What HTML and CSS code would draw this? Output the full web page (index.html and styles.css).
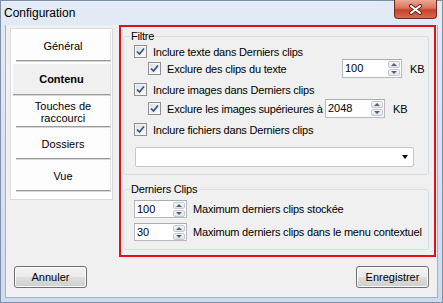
FILE: index.html
```html
<!DOCTYPE html>
<html lang="fr">
<head>
    <meta charset="UTF-8">
    <meta name="viewport" content="width=device-width, initial-scale=1.0">
    <title>Configuration</title>
    <link rel="stylesheet" href="styles.css">
</head>
<body>
    <div class="window">
        <div class="titlebar">
            <span class="title">Configuration</span>
            <div class="close-btn">
                <svg width="15" height="11" viewBox="0 0 15 11">
                    <path d="M3 2 L12 9 M12 2 L3 9" stroke="#5a2a22" stroke-width="4" stroke-linecap="round"/>
                    <path d="M3 2 L12 9 M12 2 L3 9" stroke="#fff" stroke-width="2" stroke-linecap="round"/>
                </svg>
            </div>
        </div>

        <div class="client">
            <div class="main">
                <div class="tabs">
                    <div class="tab">Général</div>
                    <div class="tab active">Contenu</div>
                    <div class="tab">Touches de<br>raccourci</div>
                    <div class="tab">Dossiers</div>
                    <div class="tab">Vue</div>
                </div>

                <div class="highlight">
                    <fieldset class="group filtre">
                        <legend>Filtre</legend>

                        <div class="row first">
                            <span class="check"><svg width="9" height="9" viewBox="0 0 9 9"><path d="M1 4.5 L3.5 7 L8 1.5" stroke="#3b4f8c" stroke-width="1.7" fill="none"/></svg></span>
                            <span class="text">Inclure texte dans Derniers clips</span>
                        </div>
                        <div class="row tall sub">
                            <div class="label size-text">
                                <span class="check"><svg width="9" height="9" viewBox="0 0 9 9"><path d="M1 4.5 L3.5 7 L8 1.5" stroke="#3b4f8c" stroke-width="1.7" fill="none"/></svg></span>
                                <span class="text">Exclure des clips du texte</span>
                            </div>
                            <div class="spin">
                                <span class="value">100</span>
                                <span class="arrows"><span class="up"></span><span class="down"></span></span>
                            </div>
                            <span class="unit">KB</span>
                        </div>

                        <div class="row gap">
                            <span class="check"><svg width="9" height="9" viewBox="0 0 9 9"><path d="M1 4.5 L3.5 7 L8 1.5" stroke="#3b4f8c" stroke-width="1.7" fill="none"/></svg></span>
                            <span class="text">Inclure images dans Derniers clips</span>
                        </div>
                        <div class="row tall sub small-gap">
                            <div class="label size-images">
                                <span class="check"><svg width="9" height="9" viewBox="0 0 9 9"><path d="M1 4.5 L3.5 7 L8 1.5" stroke="#3b4f8c" stroke-width="1.7" fill="none"/></svg></span>
                                <span class="text">Exclure les images supérieures à</span>
                            </div>
                            <div class="spin">
                                <span class="value">2048</span>
                                <span class="arrows"><span class="up"></span><span class="down"></span></span>
                            </div>
                            <span class="unit">KB</span>
                        </div>

                        <div class="row gap">
                            <span class="check"><svg width="9" height="9" viewBox="0 0 9 9"><path d="M1 4.5 L3.5 7 L8 1.5" stroke="#3b4f8c" stroke-width="1.7" fill="none"/></svg></span>
                            <span class="text">Inclure fichiers dans Derniers clips</span>
                        </div>

                        <div class="dropdown"><span class="caret"></span></div>
                    </fieldset>

                    <fieldset class="group clips">
                        <legend>Derniers Clips</legend>
                        <div class="row clip first-clip">
                            <div class="spin narrow">
                                <span class="value">100</span>
                                <span class="arrows"><span class="up"></span><span class="down"></span></span>
                            </div>
                            <span class="text">Maximum derniers clips stockée</span>
                        </div>
                        <div class="row clip">
                            <div class="spin narrow">
                                <span class="value">30</span>
                                <span class="arrows"><span class="up"></span><span class="down"></span></span>
                            </div>
                            <span class="text">Maximum derniers clips dans le menu contextuel</span>
                        </div>
                    </fieldset>
                </div>
            </div>

            <div class="footer">
                <button class="btn">Annuler</button>
                <button class="btn">Enregistrer</button>
            </div>
        </div>
    </div>
</body>
</html>
```

FILE: styles.css
```css
* {
    box-sizing: border-box;
}
body {
    margin: 0;
    font-family: "Liberation Sans", Arial, sans-serif;
    font-size: 11px;
    color: #000;
}
.window {
    width: 443px;
    height: 303px;
    display: flex;
    flex-direction: column;
    background: linear-gradient(#e2ebf6, #cddbee);
    border: 1px solid #7f8fa6;
}
.titlebar {
    height: 24px;
    display: flex;
    align-items: flex-start;
    padding-left: 3px;
}
.title {
    font-size: 12px;
    line-height: 24px;
}
.close-btn {
    margin: -1px 5px 0 auto;
    width: 43px;
    height: 19px;
    display: flex;
    align-items: center;
    justify-content: center;
    border: 1px solid #6e2b20;
    border-top: none;
    border-radius: 0 0 4px 4px;
    background: linear-gradient(#eba896, #d8735d 45%, #c8412a 55%, #da6a50);
}
.client {
    flex: 1;
    margin: 0 4px 4px 4px;
    background: #f0f0f0;
    border: 1px solid #a3b2c7;
    border-top: none;
}
.main {
    height: 232px;
    display: flex;
    align-items: flex-start;
    padding-left: 4px;
}
.tabs {
    width: 103px;
    height: 172px;
    margin-top: 3px;
    padding: 2px 0 0 5px;
    background: #fff;
    border: 1px solid #dadada;
}
.tab {
    width: 95px;
    height: 30px;
    margin-bottom: 2px;
    display: flex;
    align-items: center;
    justify-content: center;
    text-align: center;
    line-height: 12px;
    background: #fdfdfd;
    border-right: 1px solid #e2e2e2;
    border-bottom: 1px solid #9a9a9a;
    box-shadow: 0 1px 0 #d6d6d6;
}
.tab.active {
    width: 98px;
    height: 32px;
    margin-left: -3px;
    font-weight: bold;
    background: #f0f0f0;
    border-top: 1px solid #fff;
}
.highlight {
    width: 317px;
    height: 232px;
    margin-left: 6px;
    padding: 3px 5px 0 2px;
    border: 2px solid #e3101a;
}
.group {
    margin: 0;
    min-width: 0;
    padding: 0 0 7px 10px;
    border: 1px solid #d5dfe5;
    border-radius: 3px;
    letter-spacing: -0.2px;
    white-space: nowrap;
}
.group legend {
    margin-left: -4px;
    padding: 0 1px;
    line-height: 13px;
}
.clips {
    margin-top: 8px;
    padding-bottom: 8px;
}
.row {
    height: 15px;
    display: flex;
    align-items: center;
}
.row.first {
    margin-top: 1px;
}
.row.tall {
    height: 19px;
}
.row.gap {
    margin-top: 4px;
}
.row.small-gap {
    margin-top: 2px;
}
.row.sub {
    padding-left: 14px;
}
.label {
    display: flex;
    align-items: center;
    flex: none;
}
.size-text {
    width: 194px;
}
.size-images {
    width: 177px;
}
.check {
    width: 13px;
    height: 13px;
    flex: none;
    display: flex;
    align-items: center;
    justify-content: center;
    border: 1px solid #8e8f8f;
    background: linear-gradient(135deg, #dcdedf, #fbfbfb);
    box-shadow: inset 0 0 0 1px #f4f4f4;
}
.check + .text {
    margin-left: 6px;
}
.spin {
    width: 60px;
    height: 19px;
    flex: none;
    display: flex;
    align-items: center;
    padding: 0 1px 0 2px;
    background: #fff;
    border: 1px solid #b5b9c0;
    border-top-color: #abadb3;
}
.spin.narrow {
    width: 53px;
    height: 18px;
}
.value {
    line-height: 13px;
    letter-spacing: 0;
}
.arrows {
    margin-left: auto;
    width: 12px;
    height: 15px;
    display: flex;
    flex-direction: column;
    gap: 1px;
}
.arrows span {
    flex: 1;
    display: flex;
    align-items: center;
    justify-content: center;
    border: 1px solid #c3c9d1;
    border-radius: 2px;
    background: linear-gradient(#f7f7f7, #e1e5ea);
}
.arrows .up::after {
    content: "";
    border-left: 3px solid transparent;
    border-right: 3px solid transparent;
    border-bottom: 3px solid #526275;
}
.arrows .down::after {
    content: "";
    border-left: 3px solid transparent;
    border-right: 3px solid transparent;
    border-top: 3px solid #526275;
}
.unit {
    margin-left: 8px;
    letter-spacing: 0;
}
.dropdown {
    width: 279px;
    height: 20px;
    margin: 10px 0 0 1px;
    display: flex;
    align-items: center;
    justify-content: flex-end;
    padding-right: 5px;
    background: #fff;
    border: 1px solid #c6c6c6;
    border-radius: 2px;
}
.caret {
    border-left: 3.5px solid transparent;
    border-right: 3.5px solid transparent;
    border-top: 4px solid #000;
}
.row.clip {
    height: 18px;
    margin-top: 5px;
}
.row.first-clip {
    margin-top: 4px;
}
.spin + .text {
    margin-left: 6px;
}
.footer {
    display: flex;
    justify-content: space-between;
    padding: 9px 8px 0 8px;
}
.btn {
    width: 73px;
    height: 22px;
    padding: 0;
    font-family: inherit;
    font-size: 11px;
    color: #000;
    border: 1px solid #707070;
    border-radius: 3px;
    background: linear-gradient(#f2f2f2, #ebebeb 48%, #dddddd 52%, #cfcfcf);
    box-shadow: inset 0 0 0 1px #fcfcfc;
}
```
